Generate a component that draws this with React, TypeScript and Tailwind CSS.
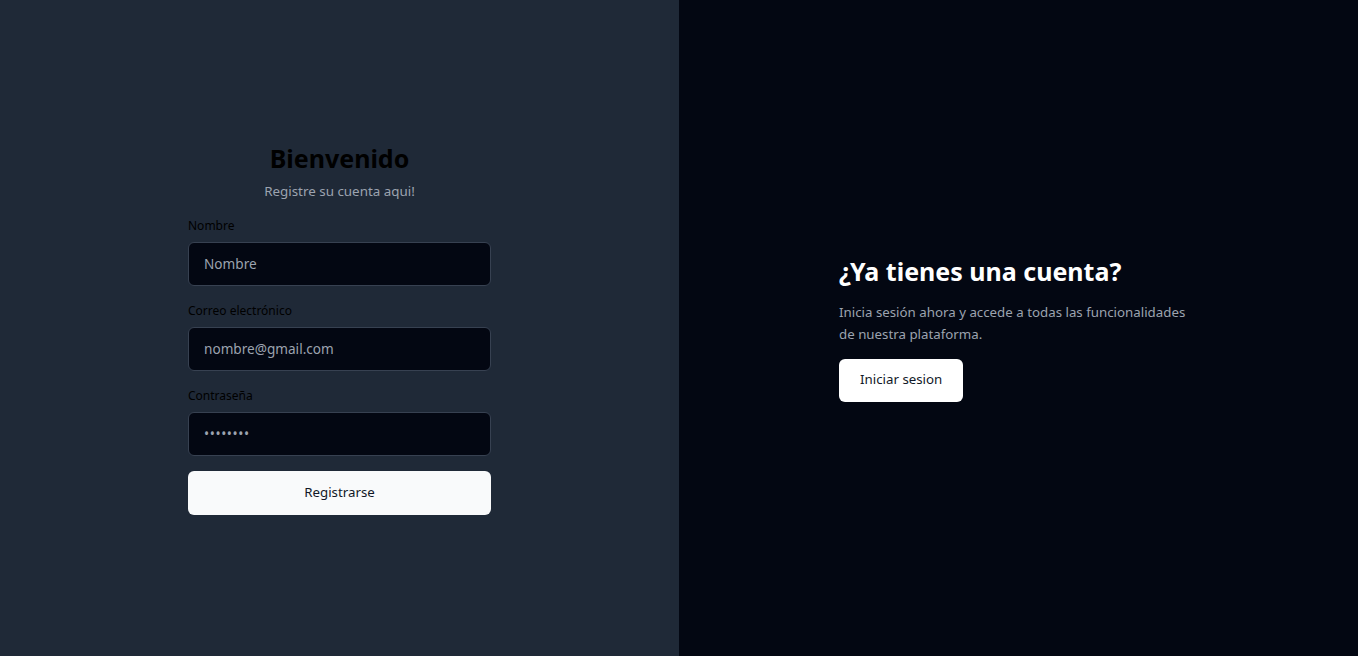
import React from "react";

export default function App() {
  const font = { fontFamily: '"Noto Sans", "Segoe UI", sans-serif' };
  return (
    <div className="flex h-[656px] w-full" style={font}>
      <div className="flex w-1/2 items-center justify-center bg-[#1f2937]">
        <form className="flex w-[303px] flex-col" onSubmit={(e) => e.preventDefault()}>
          <h1 className="text-center text-[25px] font-bold leading-8 text-black">Bienvenido</h1>
          <p className="mt-[7px] text-center text-[13.4px] leading-5 text-[#9ca3af]">Registre su cuenta aqui!</p>
          <div className="mt-[17px] flex flex-col gap-[17px]">
            <div className="flex flex-col gap-2">
              <label className="text-[12px] leading-4 text-black">Nombre</label>
              <input
                type="text"
                placeholder="Nombre"
                className="h-[44px] rounded-md border border-[#374151] bg-[#030712] px-[15px] text-[13.6px] text-white placeholder:text-[#9ca3af] outline-none"
              />
            </div>
            <div className="flex flex-col gap-2">
              <label className="text-[12px] leading-4 text-black">Correo electrónico</label>
              <input
                type="email"
                placeholder="nombre@gmail.com"
                className="h-[44px] rounded-md border border-[#374151] bg-[#030712] px-[15px] text-[13.6px] text-white placeholder:text-[#9ca3af] outline-none"
              />
            </div>
            <div className="flex flex-col gap-2">
              <label className="text-[12px] leading-4 text-black">Contraseña</label>
              <input
                type="password"
                placeholder="••••••••"
                className="h-[44px] rounded-md border border-[#374151] bg-[#030712] px-[15px] text-[13.6px] tracking-[0.6px] text-white placeholder:text-[#9ca3af] outline-none"
              />
            </div>
          </div>
          <button
            type="submit"
            className="mt-[15px] h-[44px] rounded-md bg-[#f9fafb] text-[13.3px] text-[#111827]"
          >
            Registrarse
          </button>
        </form>
      </div>
      <div className="flex w-1/2 items-center justify-center bg-[#030712]">
        <div className="flex w-[359px] flex-col items-start">
          <h2 className="text-[25px] font-bold leading-8 text-white">¿Ya tienes una cuenta?</h2>
          <p className="mt-[14px] text-[13.3px] leading-[22px] text-[#9ca3af]">
            Inicia sesión ahora y accede a todas las funcionalidades de nuestra plataforma.
          </p>
          <button className="mt-[14px] h-[43px] rounded-md bg-white px-[21px] text-[13.3px] text-[#111827]">
            Iniciar sesion
          </button>
        </div>
      </div>
    </div>
  );
}
